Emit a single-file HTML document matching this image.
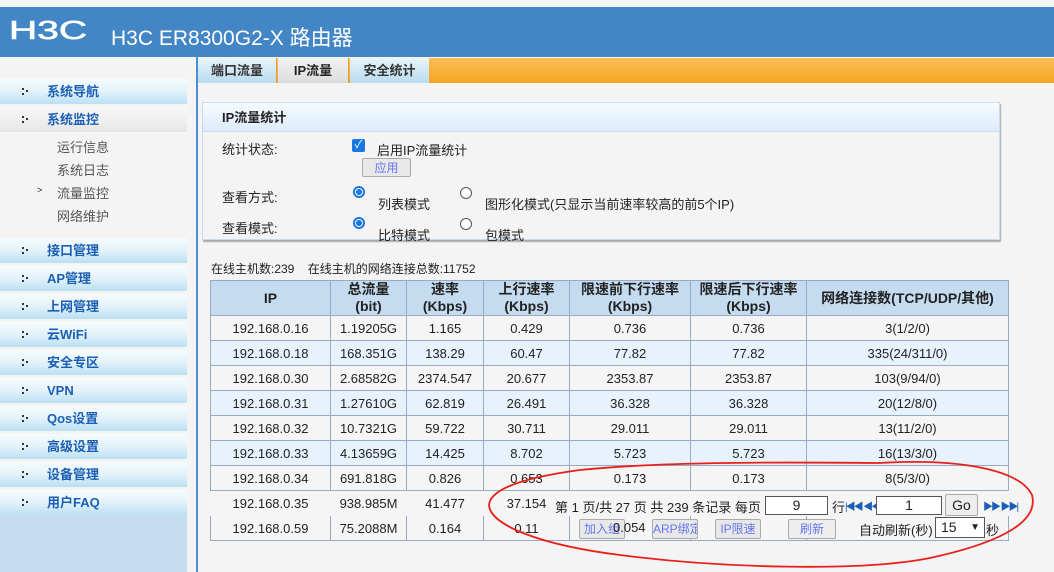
<!DOCTYPE html>
<html><head><meta charset="utf-8"><style>
*{margin:0;padding:0;box-sizing:border-box}
body{width:1054px;height:572px;background:#f4f4f4;font-family:"Liberation Sans","Noto Sans CJK SC",sans-serif;font-size:13px;color:#222;position:relative;overflow:hidden}
.abs{position:absolute}
#hdr{left:0;top:7px;width:1054px;height:50px;background:#4386c6;color:#fff}
#side{left:0;top:57px;width:187px;height:515px;background:#f4f4f4}
.mi{position:absolute;left:0;width:187px;height:25px;background:linear-gradient(#f6fbfe,#e3f2fa 50%,#b9e0f3);color:#1a5fb4;font-weight:bold;font-size:13px;line-height:25px;padding-left:47px}
.mi:before{content:"";position:absolute;left:22px;top:9px;width:6px;height:7px;border-left:2px dotted #333}
.mi:after{content:"";position:absolute;left:26px;top:11px;width:2px;height:2px;background:#333}
.sub{position:absolute;left:57px;font-size:13px;color:#555}
table{border-collapse:collapse;position:absolute;left:210px;top:280px;table-layout:fixed}
td,th{border:1px solid #97acc4;text-align:center;font-size:13px;height:25px;font-weight:normal;color:#222}
th{background:#c5dcf0;font-weight:bold;height:35px;line-height:17px;font-size:14px}
tr.b td{background:#e8f2fc}
tr.w td{background:#f5f5f5}
.btn{position:absolute;height:20px;border:1px solid #aaa;background:#e8e8e8;color:#6677ee;font-size:12px;text-align:center;line-height:18px;border-radius:2px;white-space:nowrap;overflow:hidden}
.inp{position:absolute;height:19px;border:1px solid #555;background:#fff;text-align:center;font-size:14px;line-height:17px}
</style></head><body>
<div class="abs" id="hdr">
<div class="abs" style="left:9px;top:8px;font:26px 'Liberation Sans',sans-serif;letter-spacing:0px;transform:scaleX(1.5);transform-origin:left;line-height:30px;-webkit-text-stroke:0.6px #fff">H3C</div>
<div class="abs" style="left:111px;top:15px;font-size:21px">H3C ER8300G2-X 路由器</div>
</div>
<div class="abs" id="side">
<div class="mi" style="top:22px">系统导航</div>
<div class="mi" style="top:50px;background:linear-gradient(#f8f8f8,#e6e6e6)">系统监控</div>
<div class="sub" style="top:80px">运行信息</div>
<div class="sub" style="top:103px">系统日志</div>
<div class="sub" style="top:126px">流量监控</div>
<div class="abs" style="left:37px;top:128px;font-size:9px">&gt;</div>
<div class="sub" style="top:149px">网络维护</div>
<div class="mi" style="top:181px">接口管理</div>
<div class="mi" style="top:209px">AP管理</div>
<div class="mi" style="top:237px">上网管理</div>
<div class="mi" style="top:265px">云WiFi</div>
<div class="mi" style="top:293px">安全专区</div>
<div class="mi" style="top:321px">VPN</div>
<div class="mi" style="top:349px">Qos设置</div>
<div class="mi" style="top:377px">高级设置</div>
<div class="mi" style="top:405px">设备管理</div>
<div class="mi" style="top:433px">用户FAQ</div>
<div class="abs" style="left:0;top:458px;width:187px;height:57px;background:#c6dcef"></div>
</div>
<div class="abs" style="left:196px;top:57px;width:2px;height:515px;background:#4a8fd6"></div>
<div class="abs" style="left:198px;top:58px;width:856px;height:25px;background:linear-gradient(#fbbd53,#f5a623)"></div>
<div class="abs" style="left:198px;top:58px;width:79px;height:25px;background:linear-gradient(#e9f5fb,#b8dcef);font-weight:bold;color:#333;text-align:center;line-height:25px;border-right:1px solid #e0a040">端口流量</div>
<div class="abs" style="left:278px;top:58px;width:71px;height:25px;background:linear-gradient(#f2f2f2,#dcdcdc);font-weight:bold;color:#222;text-align:center;line-height:25px;border-right:1px solid #e0a040">IP流量</div>
<div class="abs" style="left:350px;top:58px;width:79px;height:25px;background:linear-gradient(#e9f5fb,#b8dcef);font-weight:bold;color:#333;text-align:center;line-height:25px">安全统计</div>
<div class="abs" style="left:202px;top:102px;width:798px;height:138px;border:1px solid #c8dcee;box-shadow:1px 2px 1px #aaa"></div>
<div class="abs" style="left:203px;top:103px;width:796px;height:29px;background:linear-gradient(#f8fbff,#dcebfb);border-bottom:1px solid #c8dcee;font-weight:bold;line-height:29px;padding-left:19px">IP流量统计</div>
<div class="abs" style="left:222px;top:139px">统计状态:</div>
<div class="abs" style="left:352px;top:139px;width:13px;height:13px;background:#1877e0;border-radius:2px;color:#fff;font-size:11px;line-height:13px;text-align:center">✓</div>
<div class="abs" style="left:377px;top:140px">启用IP流量统计</div>
<div class="btn" style="left:362px;top:158px;width:49px;height:19px">应用</div>
<div class="abs" style="left:222px;top:187px">查看方式:</div>
<div class="abs" style="left:353px;top:186px;width:12px;height:12px;border-radius:50%;border:2px solid #1877e0;background:radial-gradient(#1877e0 50%,#fff 55%)"></div>
<div class="abs" style="left:378px;top:194px">列表模式</div>
<div class="abs" style="left:460px;top:187px;width:12px;height:12px;border-radius:50%;border:1px solid #555;background:#fff"></div>
<div class="abs" style="left:485px;top:194px">图形化模式(只显示当前速率较高的前5个IP)</div>
<div class="abs" style="left:222px;top:218px">查看模式:</div>
<div class="abs" style="left:353px;top:217px;width:12px;height:12px;border-radius:50%;border:2px solid #1877e0;background:radial-gradient(#1877e0 50%,#fff 55%)"></div>
<div class="abs" style="left:378px;top:225px">比特模式</div>
<div class="abs" style="left:460px;top:218px;width:12px;height:12px;border-radius:50%;border:1px solid #555;background:#fff"></div>
<div class="abs" style="left:485px;top:225px">包模式</div>
<div class="abs" style="left:211px;top:260px;font-size:12px">在线主机数:239&nbsp;&nbsp;&nbsp; 在线主机的网络连接总数:11752</div>
<table>
<colgroup><col style="width:120px"><col style="width:76px"><col style="width:77px"><col style="width:86px"><col style="width:121px"><col style="width:116px"><col style="width:202px"></colgroup>
<tr><th>IP</th><th>总流量<br>(bit)</th><th>速率<br>(Kbps)</th><th>上行速率<br>(Kbps)</th><th>限速前下行速率<br>(Kbps)</th><th>限速后下行速率<br>(Kbps)</th><th>网络连接数(TCP/UDP/其他)</th></tr>
<tr class="w"><td>192.168.0.16</td><td>1.19205G</td><td>1.165</td><td>0.429</td><td>0.736</td><td>0.736</td><td>3(1/2/0)</td></tr>
<tr class="b"><td>192.168.0.18</td><td>168.351G</td><td>138.29</td><td>60.47</td><td>77.82</td><td>77.82</td><td>335(24/311/0)</td></tr>
<tr class="w"><td>192.168.0.30</td><td>2.68582G</td><td>2374.547</td><td>20.677</td><td>2353.87</td><td>2353.87</td><td>103(9/94/0)</td></tr>
<tr class="b"><td>192.168.0.31</td><td>1.27610G</td><td>62.819</td><td>26.491</td><td>36.328</td><td>36.328</td><td>20(12/8/0)</td></tr>
<tr class="w"><td>192.168.0.32</td><td>10.7321G</td><td>59.722</td><td>30.711</td><td>29.011</td><td>29.011</td><td>13(11/2/0)</td></tr>
<tr class="b"><td>192.168.0.33</td><td>4.13659G</td><td>14.425</td><td>8.702</td><td>5.723</td><td>5.723</td><td>16(13/3/0)</td></tr>
<tr class="w"><td>192.168.0.34</td><td>691.818G</td><td>0.826</td><td>0.653</td><td>0.173</td><td>0.173</td><td>8(5/3/0)</td></tr>
<tr class="w"><td style="border-color:#f4f4f4">192.168.0.35</td><td style="border-color:#f4f4f4">938.985M</td><td style="border-color:#f4f4f4">41.477</td><td style="border-color:#f4f4f4">37.154</td><td style="border-color:#f4f4f4"></td><td style="border-color:#f4f4f4"></td><td style="border-color:#f4f4f4"></td></tr>
<tr class="w"><td>192.168.0.59</td><td>75.2088M</td><td>0.164</td><td>0.11</td><td></td><td></td><td></td></tr>
</table>
<div class="abs" style="left:555px;top:497px;font-size:13px">第 1 页/共 27 页 共 239 条记录 每页</div>
<div class="inp" style="left:765px;top:496px;width:63px">9</div>
<div class="abs" style="left:832px;top:497px">行</div>
<div class="abs" style="left:845px;top:498px;color:#1a5fb4;font-size:10px;letter-spacing:-2px">|◀◀&nbsp;&nbsp;◀◀</div>
<div class="inp" style="left:876px;top:496px;width:66px">1</div>
<div class="btn" style="left:945px;top:494px;width:33px;height:22px;color:#222;font-size:14px;background:#eee;line-height:20px">Go</div>
<div class="abs" style="left:983px;top:498px;color:#1a5fb4;font-size:10px;letter-spacing:-2px">▶▶&nbsp;&nbsp;▶▶|</div>
<div class="btn" style="left:579px;top:519px;width:46px">加入组</div>
<div class="abs" style="left:613px;top:520px">0.054</div>
<div class="btn" style="left:652px;top:519px;width:46px">ARP绑定</div>
<div class="btn" style="left:715px;top:519px;width:46px">IP限速</div>
<div class="btn" style="left:788px;top:519px;width:48px;background:#eee">刷新</div>
<div class="abs" style="left:859px;top:520px">自动刷新(秒)</div>
<div class="abs" style="left:935px;top:517px;width:50px;height:21px;border:1px solid #555;background:#fff;padding-left:5px;font-size:14px;line-height:19px">15<span style="position:absolute;right:4px;font-size:10px">▼</span></div>
<div class="abs" style="left:986px;top:520px">秒</div>
<svg class="abs" style="left:0;top:0" width="1054" height="572"><path d="M880 463 C960 458 1020 470 1032 495 C1040 525 990 545 930 558 C860 572 720 568 620 555 C540 545 490 525 489 505 C490 490 520 478 580 470 C660 462 760 462 880 463" fill="none" stroke="#e8201a" stroke-width="1.8"/></svg>
</body></html>
